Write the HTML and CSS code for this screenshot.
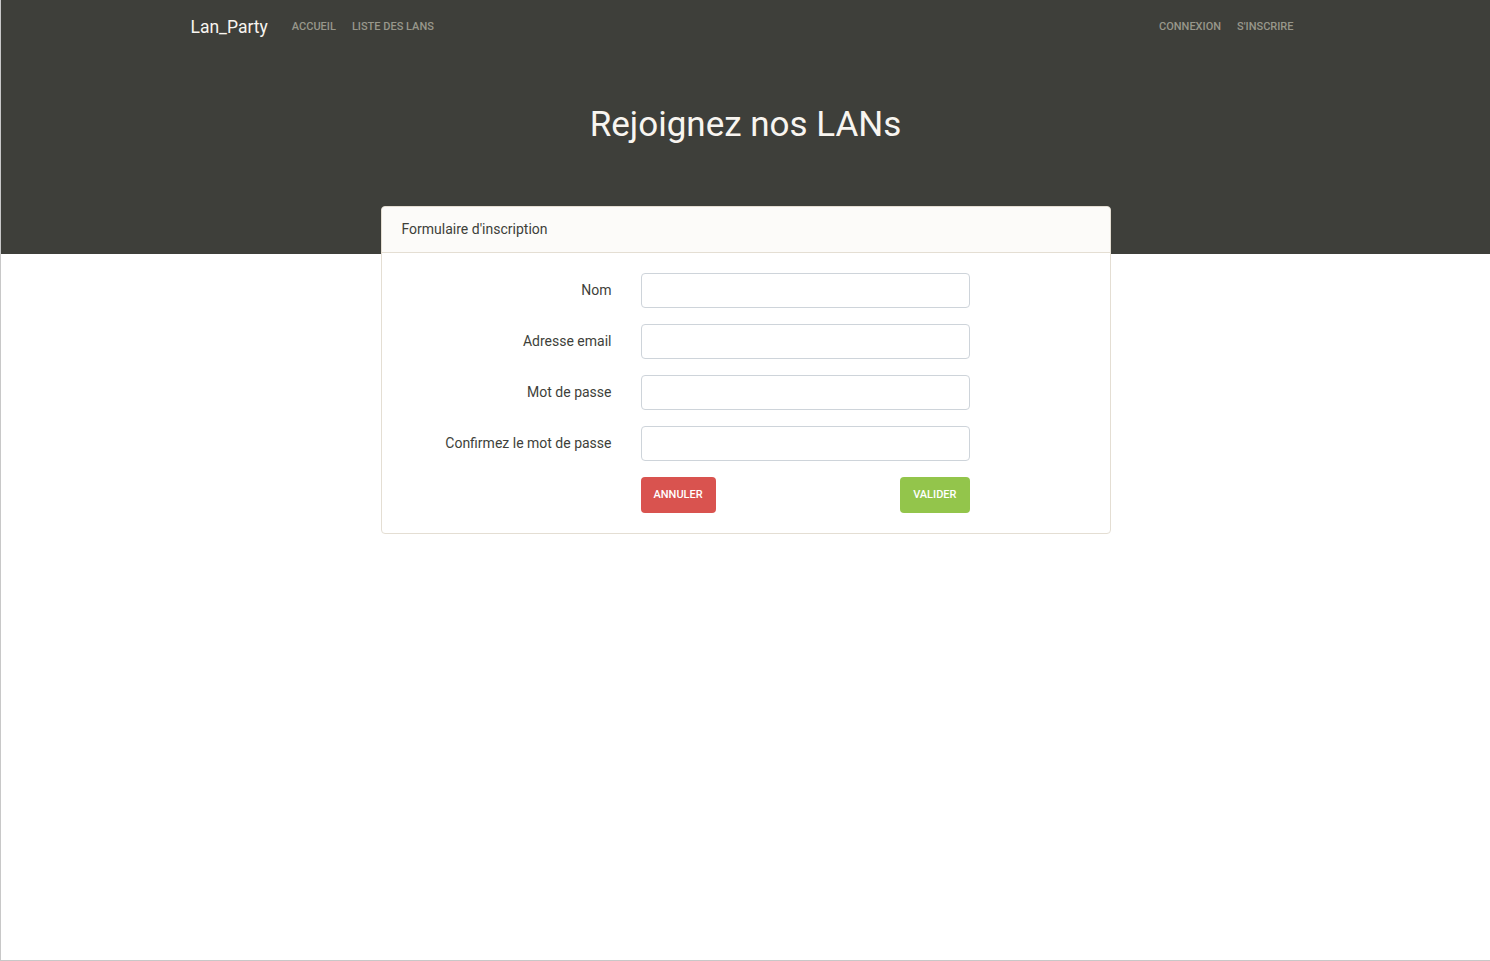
FILE: index.html
```html
<!DOCTYPE html>
<html lang="fr">
<head>
<meta charset="utf-8">
<title>Lan_Party</title>
<link rel="stylesheet" href="styles.css">
</head>
<body>
<div class="page">
  <header class="navbar">
    <div class="container nav-inner">
      <a class="brand" href="#">Lan_Party</a>
      <nav class="nav">
        <a class="nav-link" href="#">Accueil</a>
        <a class="nav-link" href="#">Liste des LANs</a>
      </nav>
      <nav class="nav nav-right">
        <a class="nav-link" href="#">Connexion</a>
        <a class="nav-link" href="#">S'inscrire</a>
      </nav>
    </div>
  </header>
  <section class="hero">
    <h1 class="hero-title">Rejoignez nos LANs</h1>
  </section>
  <main class="card">
    <div class="card-header">Formulaire d'inscription</div>
    <form class="card-body">
      <label class="form-label" for="nom">Nom</label>
      <input class="form-input" id="nom" type="text">
      <label class="form-label" for="email">Adresse email</label>
      <input class="form-input" id="email" type="email">
      <label class="form-label" for="pwd">Mot de passe</label>
      <input class="form-input" id="pwd" type="password">
      <label class="form-label" for="pwd2">Confirmez le mot de passe</label>
      <input class="form-input" id="pwd2" type="password">
      <div class="actions">
        <button class="btn btn-danger" type="button">Annuler</button>
        <button class="btn btn-success" type="submit">Valider</button>
      </div>
    </form>
  </main>
</div>
</body>
</html>
```
FILE: styles.css
```css
* { box-sizing: border-box; }
html, body { margin: 0; padding: 0; }
body {
  font-family: Roboto, "Liberation Sans", sans-serif;
  color: #3e3f3a;
  background: #fff;
  font-size: 14px;
  line-height: 1.5;
}
.page {
  height: 961px;
  border-left: 1px solid #c8c8c8;
  border-bottom: 1px solid #c8c8c8;
  overflow: hidden;
}
.container {
  width: 1140px;
  margin: 0 auto;
  padding: 0 15px;
}
.navbar {
  background: #3e3f3a;
  height: 53px;
}
.nav-inner {
  display: flex;
  align-items: center;
  height: 53px;
}
.brand {
  color: #f8f5f0;
  font-size: 17.5px;
  text-decoration: none;
  margin-right: 16px;
  padding-top: 1px;
}
.nav { display: flex; }
.nav-right { margin-left: auto; margin-right: -1px; }
.nav-link {
  color: #98978b;
  font-size: 11px;
  font-weight: 500;
  text-transform: uppercase;
  text-decoration: none;
  padding: 2px 8px 0;
}
.hero {
  background: #3e3f3a;
  padding: 51px 0 108px;
  text-align: center;
}
.hero-title {
  margin: 0;
  color: #f8f5f0;
  font-size: 35px;
  font-weight: 400;
  line-height: 42px;
}
.card {
  width: 730px;
  margin: -48px auto 0;
  background: #fff;
  border: 1px solid #e4ded3;
  border-radius: 4px;
  position: relative;
}
.card-header {
  background: #fcfbf9;
  border-bottom: 1px solid #e4ded3;
  padding: 12px 20px;
  line-height: 21px;
  font-size: 14px;
  border-radius: 4px 4px 0 0;
}
.card-body {
  padding: 20px;
  display: grid;
  grid-template-columns: 209px 329px;
  column-gap: 30px;
  row-gap: 16px;
}
.form-label {
  text-align: right;
  padding-top: 7px;
  line-height: 21px;
  font-size: 14px;
  margin-right: -1px;
}
.form-input {
  height: 35px;
  border: 1px solid #ced4da;
  border-radius: 4px;
  padding: 6px 12px;
  font: inherit;
  background: #fff;
}
.actions {
  grid-column: 2;
  display: flex;
  justify-content: space-between;
}
.btn {
  height: 36px;
  border: 0;
  border-radius: 4px;
  color: #fff;
  font-family: inherit;
  font-size: 11px;
  font-weight: 500;
  text-transform: uppercase;
  padding: 0 13px 1px;
}
.btn-danger { background: #d9534f; }
.btn-success { background: #93c54b; }
```
